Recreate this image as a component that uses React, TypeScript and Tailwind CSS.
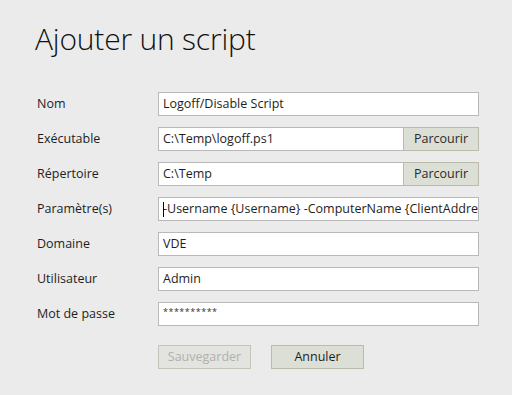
import React from 'react';

const rows: { label: string; value: string; browse?: boolean; caret?: boolean; password?: boolean }[] = [
  { label: 'Nom', value: 'Logoff/Disable Script' },
  { label: 'Exécutable', value: 'C:\\Temp\\logoff.ps1', browse: true },
  { label: 'Répertoire', value: 'C:\\Temp', browse: true },
  { label: 'Paramètre(s)', value: '-Username {Username} -ComputerName {ClientAddress}', caret: true },
  { label: 'Domaine', value: 'VDE' },
  { label: 'Utilisateur', value: 'Admin' },
  { label: 'Mot de passe', value: '**********', password: true },
];

export default function App() {
  return (
    <div className="w-[512px] h-[395px] bg-[#ebebeb] text-[#1e1e1e] overflow-hidden font-['Open_Sans',sans-serif]">
      <h1 className="pl-[35px] pt-[16px] text-[30px] font-light leading-[46px] tracking-[-0.2px] text-[#111]">
        Ajouter un script
      </h1>

      <div className="mt-[30px] pl-[37px] flex flex-col gap-[11px]">
        {rows.map((r) => (
          <div key={r.label} className="flex items-center h-[24px]">
            <div className="w-[121px] text-[12.5px] leading-none">{r.label}</div>
            <div className="flex w-[321px] h-[24px]">
              <div className="relative flex-1 min-w-0 bg-white border border-[#b9b9b9] flex items-center px-[4px] overflow-hidden whitespace-nowrap">
                {r.caret && <span className="absolute left-[4px] top-[4px] w-px h-[15px] bg-black" />}
                <span className={r.password ? 'text-[9px] tracking-[0.5px] text-[#333] -mt-[4px]' : 'text-[12.5px]'}>
                  {r.value}
                </span>
              </div>
              {r.browse && (
                <div className="w-[75px] bg-[#dcdfd5] border border-[#b8bca8] border-l-0 flex items-center justify-center text-[12.5px] text-[#2a2a2a]">
                  Parcourir
                </div>
              )}
            </div>
          </div>
        ))}
      </div>

      <div className="mt-[19px] pl-[158px] flex gap-[20px]">
        <div className="w-[93px] h-[24px] bg-[#e3e4df] border border-[#c3c6b6] flex items-center justify-center text-[12.5px] text-[#b0b0b0]">
          Sauvegarder
        </div>
        <div className="w-[93px] h-[24px] bg-[#dcdfd5] border border-[#b8bca8] flex items-center justify-center text-[12.5px] text-[#1e1e1e]">
          Annuler
        </div>
      </div>
    </div>
  );
}
